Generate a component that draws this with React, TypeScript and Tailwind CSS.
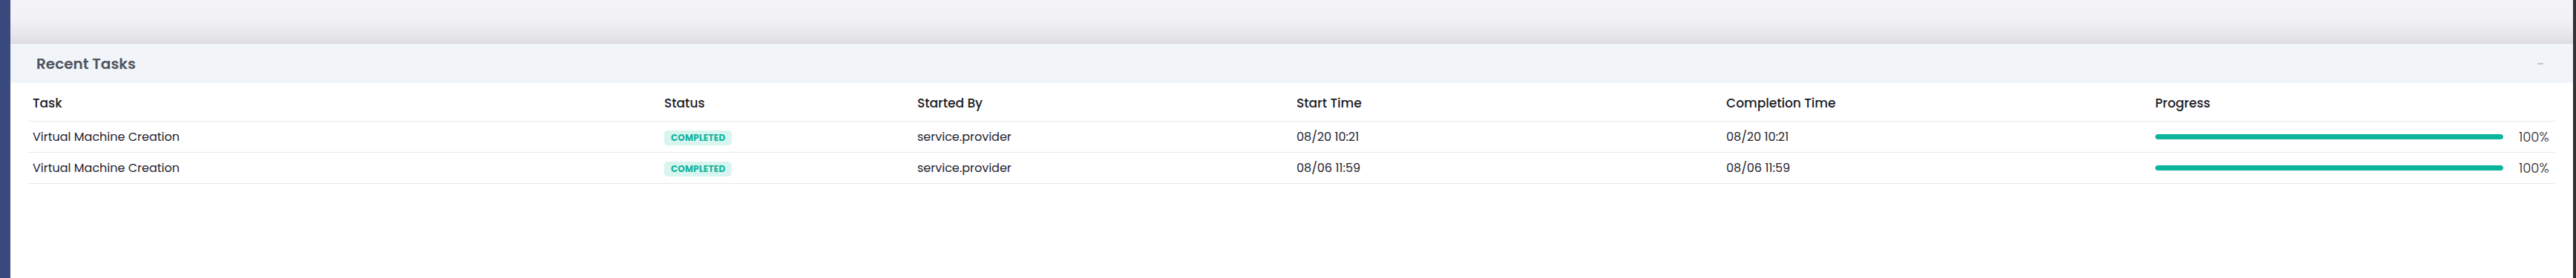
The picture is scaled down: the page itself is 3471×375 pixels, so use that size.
import { Minus } from 'lucide-react'

interface TaskRow {
  task: string
  status: string
  startedBy: string
  startTime: string
  completionTime: string
  progress: number
}

const tasks: TaskRow[] = [
  {
    task: 'Virtual Machine Creation',
    status: 'COMPLETED',
    startedBy: 'service.provider',
    startTime: '08/20 10:21',
    completionTime: '08/20 10:21',
    progress: 100,
  },
  {
    task: 'Virtual Machine Creation',
    status: 'COMPLETED',
    startedBy: 'service.provider',
    startTime: '08/06 11:59',
    completionTime: '08/06 11:59',
    progress: 100,
  },
]

const cols = 'grid grid-cols-[851px_341px_511px_579px_578px_545px]'
const headers = ['Task', 'Status', 'Started By', 'Start Time', 'Completion Time', 'Progress']

export default function App() {
  return (
    <div
      className="flex w-[3471px] h-[375px] bg-white text-[#1f2430]"
      style={{ fontFamily: "Poppins, 'Open Sans', sans-serif" }}
    >
      <div className="w-[14px] shrink-0 bg-[#3b4a7e]" />

      <div className="flex-1 flex flex-col min-w-0">
        <div className="h-[59px] shrink-0 bg-[linear-gradient(to_bottom,#f3f3f8_0%,#f1f1f6_45%,#e6e6eb_80%,#dcdce1_100%)]" />

        <div className="h-[53px] shrink-0 bg-[#f1f5f9] flex items-center justify-between pl-[35px] pr-[38px]">
          <h2 className="text-[20px] font-semibold text-[#4f535d]">Recent Tasks</h2>
          <Minus size={12} strokeWidth={2} className="text-[#8a8fa0]" />
        </div>

        <div className="px-6">
          <div className={`${cols} border-b border-[#e8e8ec] h-[52px] items-end pb-[12px]`}>
            {headers.map(h => (
              <div key={h} className="px-[6px] text-[17px] font-medium leading-6 text-[#1a1c24]">
                {h}
              </div>
            ))}
          </div>

          {tasks.map((t, i) => (
            <div key={i} className={`${cols} border-b border-[#e8e8ec] h-[42px] items-center text-[16px]`}>
              <div className="px-[6px]">{t.task}</div>
              <div className="px-[6px]">
                <span className="inline-flex items-center h-[20px] px-[9px] rounded-[5px] bg-[#d8f5ef] text-[#12b39e] text-[12px] font-bold tracking-[0.2px]">
                  {t.status}
                </span>
              </div>
              <div className="px-[6px]">{t.startedBy}</div>
              <div className="px-[6px]">{t.startTime}</div>
              <div className="px-[6px]">{t.completionTime}</div>
              <div className="px-[6px] flex items-center">
                <div className="w-[469px] h-[7px] rounded-full bg-[#e5e7eb] overflow-hidden">
                  <div className="h-full rounded-full bg-[#0bb59b]" style={{ width: `${t.progress}%` }} />
                </div>
                <span className="ml-[21px] text-[18px] font-light">{t.progress}%</span>
              </div>
            </div>
          ))}
        </div>
      </div>

      <div className="w-[4px] shrink-0 bg-[#333333]" />
    </div>
  )
}
